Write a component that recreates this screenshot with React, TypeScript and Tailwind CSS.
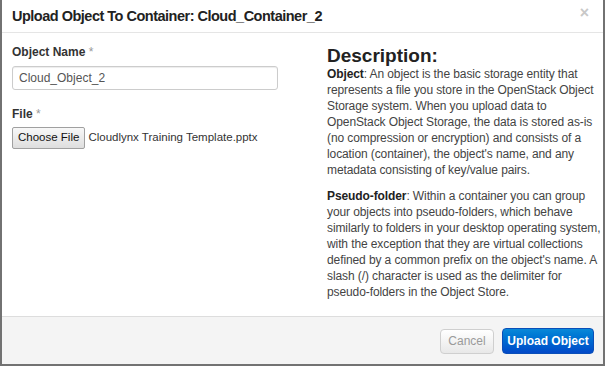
export default function App() {
    return (
        <main
            className="w-[605px] h-[366px] bg-white border-x-2 border-b-2 border-[#727272] flex flex-col text-[#333333]"
            style={{ fontFamily: '"Liberation Sans", Arial, sans-serif' }}
        >
            {/* ================= HEADER ================= */}
            <header className="h-[33px] shrink-0 border-b border-[#e5e5e5] pl-[10px] pr-[14px] flex items-center justify-between">
                <h3 className="text-[14.5px] tracking-[-0.5px] font-bold text-[#222222] leading-none">
                    Upload Object To Container: Cloud_Container_2
                </h3>
                <span className="-mt-[6px] text-[16px] font-bold text-[#c8c8c8] leading-none">×</span>
            </header>

            {/* ================= BODY ================= */}
            <section className="flex-1 flex pl-[10px]">
                <div className="w-[266px] pt-[11px]">
                    <label className="block text-[12px] leading-[16px] font-bold text-[#333333]">
                        Object Name <span className="text-[#999999] font-normal">*</span>
                    </label>
                    <input
                        defaultValue="Cloud_Object_2"
                        className="mt-[6px] w-[266px] h-[24px] border border-[#cccccc] rounded-[3px] px-[6px] text-[12px] text-[#555555] shadow-[inset_0_1px_1px_rgba(0,0,0,0.075)] outline-none"
                    />

                    <label className="block mt-[16px] text-[12px] leading-[16px] font-bold text-[#333333]">
                        File <span className="text-[#999999] font-normal">*</span>
                    </label>
                    <div className="mt-[5px] flex items-center gap-[3px]">
                        <button className="h-[22px] px-[5px] border border-[#a0a0a0] rounded-[2px] bg-gradient-to-b from-[#f8f8f8] to-[#dedede] text-[11.5px] text-[#111111]">
                            Choose File
                        </button>
                        <span className="text-[11.5px] text-[#333333]">Cloudlynx Training Template.pptx</span>
                    </div>
                </div>

                <div className="ml-[49px] flex-1 pt-[12px]">
                    <h3 className="text-[19px] leading-[21px] font-bold text-[#222222]">Description:</h3>
                    <p className="text-[12px] tracking-[-0.1px] leading-[16px] text-[#444444]">
                        <strong className="text-[#222222]">Object</strong>: An object is the basic storage entity that
                        represents a file you store in the OpenStack Object Storage system. When you upload data to
                        OpenStack Object Storage, the data is stored as-is (no compression or encryption) and consists
                        of a location (container), the object's name, and any metadata consisting of key/value pairs.
                    </p>
                    <p className="mt-[10px] text-[12px] tracking-[-0.1px] leading-[16px] text-[#444444]">
                        <strong className="text-[#222222]">Pseudo-folder</strong>: Within a container you can group
                        your objects into pseudo-folders, which behave similarly to folders in your desktop operating
                        system, with the exception that they are virtual collections defined by a common prefix on the
                        object's name. A slash (/) character is used as the delimiter for pseudo-folders in the Object
                        Store.
                    </p>
                </div>
            </section>

            {/* ================= FOOTER ================= */}
            <footer className="h-[48px] shrink-0 border-t border-[#dddddd] bg-[#f4f4f4] flex items-center justify-end gap-[8px] pr-[9px] pt-[1px]">
                <button className="h-[25px] w-[54px] rounded-[4px] border border-[#cfcfcf] bg-gradient-to-b from-white to-[#e8e8e8] text-[12px] text-[#9a9a9a]">
                    Cancel
                </button>
                <button className="h-[26px] w-[92px] rounded-[4px] border border-[#0a4fb8] bg-gradient-to-b from-[#0a88d8] to-[#0448c8] text-[12px] font-bold text-white">
                    Upload Object
                </button>
            </footer>
        </main>
    );
}
